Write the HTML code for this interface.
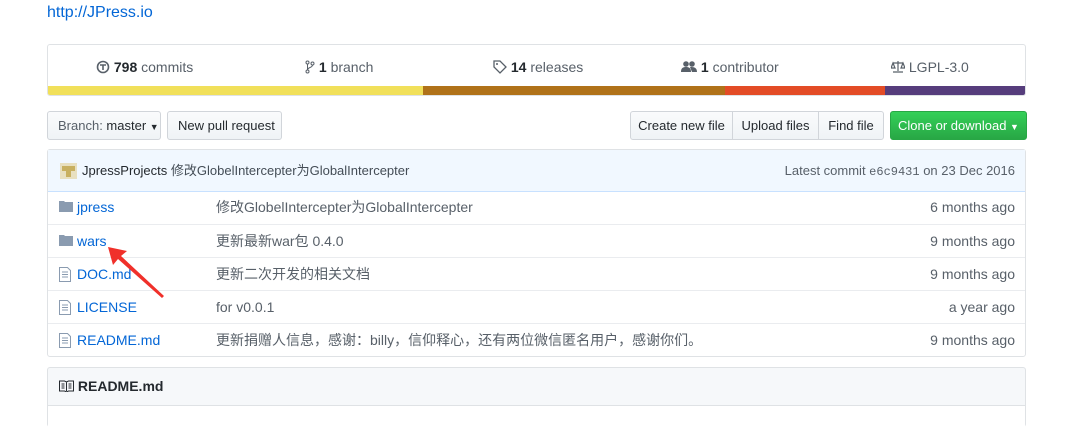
<!DOCTYPE html>
<html><head><meta charset="utf-8"><style>
*{box-sizing:border-box;margin:0;padding:0}
body{width:1069px;height:412px;background:#fff;font-family:"Liberation Sans","Noto Sans CJK SC",sans-serif;font-size:14px;color:#24292e;position:relative;overflow:hidden}
.abs{position:absolute}
a{color:#0366d6;text-decoration:none}
.stats{left:47px;top:44px;width:979px;height:52px;border:1px solid #dfe2e5;border-radius:3px;overflow:hidden}
.stats .it{position:absolute;top:14px;color:#586069;font-size:14px;white-space:nowrap}
.stats b{color:#24292e;font-weight:bold}
.bar{position:absolute;top:41px;height:10px}
.btn{position:absolute;top:111px;height:29px;border:1px solid #d1d5da;background:linear-gradient(#fafbfc,#eff3f6);font-size:13px;line-height:27px;padding:0 10px;border-radius:3px;color:#24292e;white-space:nowrap;text-align:center}
.tbl{left:47px;top:149px;width:979px;height:208px;border:1px solid #dfe2e5;border-radius:3px}
.hdr{position:absolute;left:0;top:0;width:977px;height:42px;background:#f1f8ff;border-bottom:1px solid #c8e1ff;font-size:13px;line-height:42px}
.row{position:absolute;left:0;width:977px;height:33px;border-top:1px solid #eaecef;line-height:32px;font-size:14px}
.row .n{position:absolute;left:29px}
.row .m{position:absolute;left:168px;color:#586069}
.row .t{position:absolute;right:10px;color:#586069}
.row svg{position:absolute;left:11px;top:9px}
</style></head><body>
<a class="abs" style="left:47px;top:4px;font-size:16px">http://JPress.io</a>
<div class="abs stats">
 <div class="it" style="left:48px"><svg width="14" height="14" viewBox="0 0 14 14" style="vertical-align:-2px"><circle cx="7" cy="7" r="5.5" fill="none" stroke="#586069" stroke-width="1.6"/><path d="M4 5h6M7 5v5" stroke="#586069" stroke-width="1.6"/></svg> <b>798</b> commits</div>
 <div class="it" style="left:257px"><svg width="10" height="14" viewBox="0 0 10 14" style="vertical-align:-2px"><circle cx="2.5" cy="2.5" r="1.5" fill="none" stroke="#586069"/><circle cx="2.5" cy="11.5" r="1.5" fill="none" stroke="#586069"/><circle cx="7.5" cy="3.5" r="1.5" fill="none" stroke="#586069"/><path d="M2.5 4v6M7.5 5c0 3-5 2-5 5" fill="none" stroke="#586069"/></svg> <b>1</b> branch</div>
 <div class="it" style="left:445px"><svg width="14" height="14" viewBox="0 0 14 14" style="vertical-align:-2px"><path d="M1 1h6l6 6-6 6-6-6z" fill="none" stroke="#586069" stroke-width="1.3"/><circle cx="4" cy="4" r="1" fill="#586069"/></svg> <b>14</b> releases</div>
 <div class="it" style="left:633px"><svg width="16" height="13" viewBox="0 0 16 13" style="vertical-align:-1px"><circle cx="5" cy="4" r="2.8" fill="#586069"/><circle cx="11" cy="4" r="2.8" fill="#586069"/><path d="M0 12c0-4 2-5 5-5s5 1 5 5zM9 7c3 0 7 0 7 5h-5z" fill="#586069"/></svg> <b>1</b> contributor</div>
 <div class="it" style="left:843px"><svg width="14" height="13" viewBox="0 0 14 13" style="vertical-align:-1px"><path d="M7 1v10M2 12h10M2 3h10M2 3l-2 5h4zM12 3l-2 5h4z" fill="none" stroke="#586069" stroke-width="1.2"/></svg> LGPL-3.0</div>
 <div class="bar" style="left:0;width:375px;background:#f1e05a"></div>
 <div class="bar" style="left:375px;width:302px;background:#b07219"></div>
 <div class="bar" style="left:677px;width:160px;background:#e34c26"></div>
 <div class="bar" style="left:837px;width:142px;background:#563d7c"></div>
</div>
<div class="btn" style="left:47px;width:114px;text-align:left"><span style="color:#586069">Branch:</span> master <span style="font-size:9px">▼</span></div>
<div class="btn" style="left:167px;width:115px">New pull request</div>
<div class="btn" style="left:630px;width:103px;border-radius:3px 0 0 3px;padding:0">Create new file</div>
<div class="btn" style="left:732px;width:87px;border-radius:0;padding:0">Upload files</div>
<div class="btn" style="left:818px;width:66px;border-radius:0 3px 3px 0;padding:0">Find file</div>
<div class="btn" style="left:890px;width:137px;background:linear-gradient(#34d058,#28a745);border-color:#28a745;color:#fff;padding:0">Clone or download <span style="font-size:9px">▼</span></div>
<div class="abs tbl">
 <div class="hdr"><span style="position:absolute;left:12px;top:13px;width:17px;height:16px;background:#e8e0c0"><span style="position:absolute;left:2px;top:3px;width:13px;height:5px;background:#c8b060"></span><span style="position:absolute;left:6px;top:7px;width:5px;height:7px;background:#c8b060"></span></span><span style="position:absolute;left:34px"><b style="font-weight:normal;color:#24292e">JpressProjects</b> <span style="color:#444d56">修改GlobelIntercepter为GlobalIntercepter</span></span><span style="position:absolute;right:10px;color:#586069">Latest commit <span style="font-family:'Liberation Mono',monospace;font-size:12px">e6c9431</span> on 23 Dec 2016</span></div>
 <div class="row" style="top:41px;border-top:0"><svg width="14" height="12" viewBox="0 0 14 12"><path d="M0 1h5l1 1h8v10H0z" fill="#8a9bb0"/></svg><a class="n">jpress</a><span class="m">修改GlobelIntercepter为GlobalIntercepter</span><span class="t">6 months ago</span></div>
 <div class="row" style="top:74px"><svg width="14" height="12" viewBox="0 0 14 12"><path d="M0 1h5l1 1h8v10H0z" fill="#8a9bb0"/></svg><a class="n">wars</a><span class="m">更新最新war包 0.4.0</span><span class="t">9 months ago</span></div>
 <div class="row" style="top:107px"><svg width="12" height="15" viewBox="0 0 12 15"><path d="M.5.5h8l3 3v11H.5z M3 5h6M3 7.5h6M3 10h6" fill="none" stroke="#8a9bb0"/></svg><a class="n">DOC.md</a><span class="m">更新二次开发的相关文档</span><span class="t">9 months ago</span></div>
 <div class="row" style="top:140px"><svg width="12" height="15" viewBox="0 0 12 15"><path d="M.5.5h8l3 3v11H.5z M3 5h6M3 7.5h6M3 10h6" fill="none" stroke="#8a9bb0"/></svg><a class="n">LICENSE</a><span class="m">for v0.0.1</span><span class="t">a year ago</span></div>
 <div class="row" style="top:173px"><svg width="12" height="15" viewBox="0 0 12 15"><path d="M.5.5h8l3 3v11H.5z M3 5h6M3 7.5h6M3 10h6" fill="none" stroke="#8a9bb0"/></svg><a class="n">README.md</a><span class="m">更新捐赠人信息，感谢：billy，信仰释心，还有两位微信匿名用户，感谢你们。</span><span class="t">9 months ago</span></div>
</div>
<div class="abs" style="left:47px;top:367px;width:979px;height:60px;border:1px solid #dfe2e5;border-radius:3px;background:#f6f8fa">
 <div style="position:absolute;left:0;top:37px;width:977px;height:30px;background:#fff;border-top:1px solid #dfe2e5"></div>
 <div style="position:absolute;left:11px;top:10px;font-weight:bold;font-size:14px"><svg width="15" height="12" viewBox="0 0 15 12" style="vertical-align:-1px"><path d="M.5 1h5l2 1 2-1h5v10h-5l-2 1-2-1h-5zM7.5 2v9M2.5 4h3M2.5 6h3M2.5 8h3M9.5 4h3M9.5 6h3M9.5 8h3" fill="none" stroke="#24292e"/></svg> README.md</div>
</div>
<svg class="abs" style="left:100px;top:240px" width="70" height="65" viewBox="0 0 70 65"><path d="M8 7L27 11 21 16 64 56 62 58 18 19 13 25z" fill="#f0302a"/></svg>
</body></html>
